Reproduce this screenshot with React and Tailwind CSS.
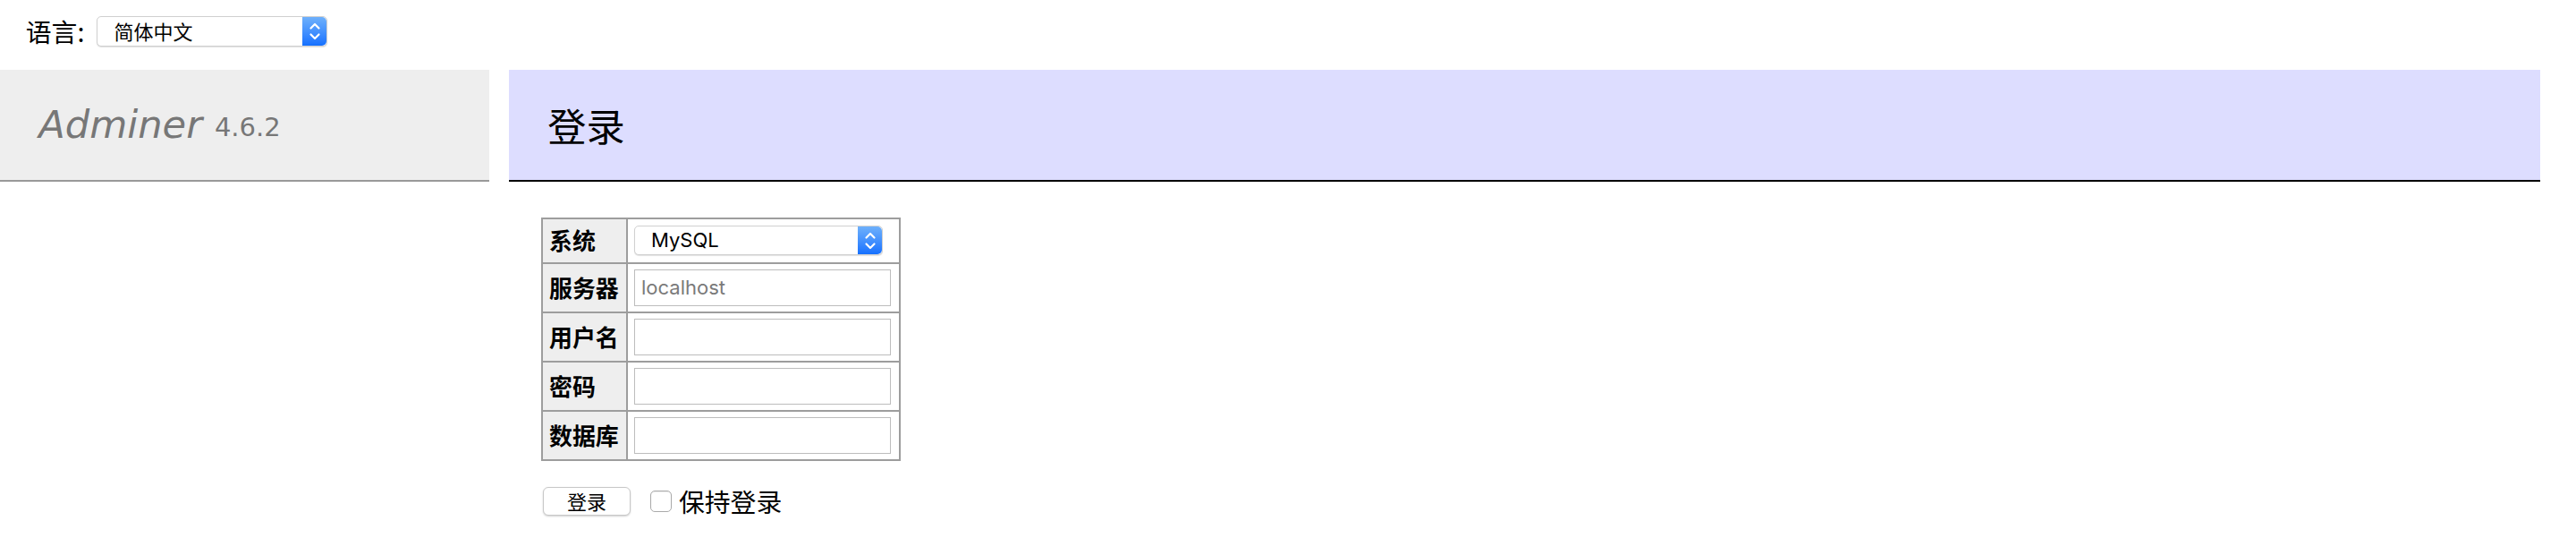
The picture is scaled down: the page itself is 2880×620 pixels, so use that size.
import { useState } from 'react'

const fields = [
  { label: '服务器', placeholder: 'localhost' },
  { label: '用户名', placeholder: '' },
  { label: '密码', placeholder: '' },
  { label: '数据库', placeholder: '' }
]

function Arrows() {
  return (
    <span className="flex h-full w-[27px] shrink-0 items-center justify-center rounded-r-[5px] bg-gradient-to-b from-[#6eb0fb] to-[#1470ff]">
      <svg width="14" height="24" viewBox="0 0 14 24" fill="none" stroke="#fff" strokeWidth="2.2" strokeLinecap="round" strokeLinejoin="round">
        <path d="M2.5 8.5 L7 4 L11.5 8.5" />
        <path d="M2.5 15.5 L7 20 L11.5 15.5" />
      </svg>
    </span>
  )
}

function FakeSelect({ value, className, textClass }) {
  return (
    <div className={`flex items-stretch rounded-[5px] border border-[#d0d0d0] bg-white shadow-[0_1px_1px_rgba(0,0,0,0.12)] ${className}`}>
      <span className={`flex flex-1 items-center text-black ${textClass}`}>{value}</span>
      <Arrows />
    </div>
  )
}

export default function App() {
  const [keep, setKeep] = useState(false)

  return (
    <div className="min-h-[620px] w-[2880px] bg-white text-[28.8px] leading-[1.25] text-black" style={{ fontFamily: '"DejaVu Sans", "Noto Sans CJK SC", sans-serif' }}>
      {/* language */}
      <div className="h-[77.6px] pl-[28.8px] pt-[8.64px]">
        <div className="flex h-[51.84px] items-center gap-[14px]">
          <span className="font-['Noto_Sans_CJK_SC',sans-serif]">语言:</span>
          <FakeSelect
            value="简体中文"
            className="h-[34px] w-[258px]"
            textClass="pl-[18px] text-[22px] font-['Noto_Sans_CJK_SC',sans-serif]"
          />
        </div>
      </div>

      <div className="flex items-start">
        {/* menu */}
        <div className="w-[547px] shrink-0">
          <h1 className="flex h-[125px] items-center border-b-2 border-[#999] bg-[#eee] px-[43.2px] text-[43.2px] leading-[54px] font-normal text-[#777]">
            <span className="italic">Adminer</span>
            <span className="ml-[14px] mt-[6px] text-[29px]">4.6.2</span>
          </h1>
        </div>

        {/* content */}
        <div className="ml-[22px] flex-1 pr-[40px]">
          <h2 className="flex h-[125px] items-center border-b-2 border-black bg-[#ddf] px-[43.2px] text-[43.2px] leading-[54px] font-normal font-['Noto_Sans_CJK_SC',sans-serif]">
            登录
          </h2>

          <div className="ml-[36px] mt-[40px]">
            <table className="border-collapse text-[25.92px] font-['Noto_Sans_CJK_SC',sans-serif]">
              <tbody>
                <tr className="h-[50px]">
                  <th className="w-[95px] border-2 border-[#9d9d9d] bg-[#eee] px-[7px] text-left font-bold">系统</th>
                  <td className="w-[305px] border-2 border-[#9d9d9d] px-[7px]">
                    <FakeSelect
                      value="MySQL"
                      className="h-[33px] w-[278px]"
                      textClass="pl-[18px] text-[22px] font-['Inter',sans-serif]"
                    />
                  </td>
                </tr>
                {fields.map(f => (
                  <tr key={f.label} className="h-[55px]">
                    <th className="border-2 border-[#9d9d9d] bg-[#eee] px-[7px] text-left font-bold">{f.label}</th>
                    <td className="border-2 border-[#9d9d9d] px-[7px]">
                      <input
                        className="block h-[41px] w-[287px] border border-[#bdbdbd] bg-white px-[7px] text-[22px] text-black outline-none placeholder:text-[#7a7a7a] font-['Inter',sans-serif]"
                        placeholder={f.placeholder}
                      />
                    </td>
                  </tr>
                ))}
              </tbody>
            </table>

            <div className="mt-[27px] flex items-center font-['Noto_Sans_CJK_SC',sans-serif]">
              <button className="ml-[2px] flex h-[32px] w-[98px] items-center justify-center rounded-[6px] border border-[#c8c8c8] bg-white text-[22px] shadow-[0_1px_2px_rgba(0,0,0,0.18)]">
                登录
              </button>
              <label className="ml-[22px] flex items-center gap-[8px]">
                <span
                  className={`block h-[24px] w-[24px] rounded-[5px] border border-[#aaa] shadow-[inset_0_1px_1px_rgba(0,0,0,0.08)] ${keep ? 'bg-[#1470ff]' : 'bg-white'}`}
                  onClick={() => setKeep(!keep)}
                />
                <span className="text-[28.8px]">保持登录</span>
              </label>
            </div>
          </div>
        </div>
      </div>
    </div>
  )
}
